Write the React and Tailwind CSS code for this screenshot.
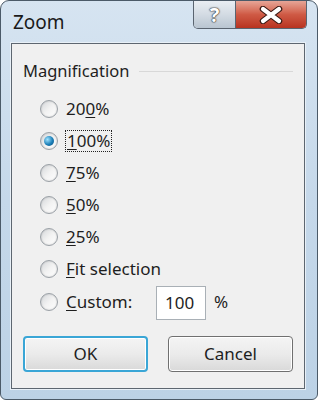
import React from "react";

const font = { fontFamily: '"Noto Sans", "Open Sans", Arial, sans-serif' };

const Radio = ({ checked }) => (
  <span className="relative flex h-[18px] w-[18px] shrink-0 items-center justify-center rounded-full border border-[#9aa0a6] bg-gradient-to-br from-[#d4d7da] via-[#f2f2f2] to-[#ffffff] shadow-[inset_0_0_2px_rgba(0,0,0,0.2)]">
    {checked && (
      <span className="h-[10px] w-[10px] rounded-full bg-[radial-gradient(circle_at_35%_35%,#9fe3ff,#1b7fb8_55%,#0b4c7a)]" />
    )}
  </span>
);

const options = [
  { pre: "20", u: "0", post: "%" },
  { pre: "", u: "1", post: "00%", checked: true },
  { pre: "", u: "7", post: "5%" },
  { pre: "", u: "5", post: "0%" },
  { pre: "", u: "2", post: "5%" },
  { pre: "", u: "F", post: "it selection" },
];

export default function App() {
  return (
    <div className="h-[400px] w-[318px] bg-white" style={font}>
      <div className="relative flex h-[400px] w-[318px] flex-col rounded-t-[9px] rounded-b-[6px] border border-[#4b5a68] bg-gradient-to-b from-[#d6e4f1] via-[#c5d8ea] to-[#bcd2e6]">
        {/* title bar */}
        <div className="flex h-[42px] items-start justify-between pl-[12px]">
          <span className="mt-[9px] text-[19px] leading-[24px] text-[#1a1a1a]">Zoom</span>
          <div className="mr-[10px] flex h-[28px] overflow-hidden rounded-b-[5px] border border-t-0 border-[#5a6470]">
            <div className="flex w-[42px] items-center justify-center border-r border-[#5a6470] bg-gradient-to-b from-[#e9eef3] via-[#d3dbe3] to-[#b9c5d1] text-[20px] font-bold leading-none text-white [text-shadow:0_0_2px_#333,0_0_1px_#333,0_0_1px_#333]">
              ?
            </div>
            <div className="flex w-[70px] items-center justify-center bg-gradient-to-b from-[#e6a597] via-[#cf5a45] to-[#b8321f]">
              <svg width="26" height="18" viewBox="0 0 26 18">
                <path d="M5 3 L21 15 M21 3 L5 15" stroke="#3a1a14" strokeWidth="6.5" strokeLinecap="round" />
                <path d="M5 3 L21 15 M21 3 L5 15" stroke="#ffffff" strokeWidth="4.2" strokeLinecap="round" />
              </svg>
            </div>
          </div>
        </div>
        {/* client area */}
        <div className="mb-[10px] ml-[10px] mr-[12px] flex flex-1 flex-col border border-[#5d6670] bg-[#f0f0f0] pl-[11px] pr-[11px] shadow-[0_0_0_1px_#e8f0f7]">
          <div className="mt-[16px] flex items-center">
            <span className="text-[16.5px] leading-[22px] text-[#1e1e1e]">Magnification</span>
            <div className="ml-[10px] h-[1px] flex-1 bg-[#d8d8d8]" />
          </div>
          <div className="mt-[17px] flex flex-col gap-[13px] pl-[17px]">
            {options.map((o, i) => (
              <div key={i} className="flex h-[19px] items-center gap-[8px]">
                <Radio checked={o.checked} />
                <span
                  className={
                    "text-[17px] leading-[20px] text-[#1e1e1e] " +
                    (o.checked ? "outline outline-1 outline-dotted outline-[#222] outline-offset-0 px-[1px]" : "")
                  }
                >
                  {o.pre}
                  <span className="underline underline-offset-2">{o.u}</span>
                  {o.post}
                </span>
              </div>
            ))}
            <div className="mt-[1px] flex h-[19px] items-center gap-[8px]">
              <Radio />
              <span className="w-[82px] text-[17px] leading-[20px] text-[#1e1e1e]">
                <span className="underline underline-offset-2">C</span>ustom:
              </span>
              <div className="mt-[3px] flex h-[34px] w-[50px] shrink-0 items-center border border-[#a9b0b6] bg-white pl-[8px] text-[17px] text-[#1e1e1e]">
                100
              </div>
              <span className="text-[17px] text-[#1e1e1e]">%</span>
            </div>
          </div>
          <div className="mt-[25px] flex justify-between">
            <button className="h-[36px] w-[125px] rounded-[4px] border-2 border-[#3aa6d6] bg-gradient-to-b from-[#f4f4f4] via-[#ebebeb] to-[#d9d9d9] text-[17px] text-[#1e1e1e] shadow-[inset_0_0_0_1px_#ffffff]">
              OK
            </button>
            <button className="h-[36px] w-[125px] rounded-[4px] border border-[#707070] bg-gradient-to-b from-[#f4f4f4] via-[#ebebeb] to-[#d9d9d9] text-[17px] text-[#1e1e1e] shadow-[inset_0_0_0_1px_#ffffff]">
              Cancel
            </button>
          </div>
        </div>
      </div>
    </div>
  );
}
